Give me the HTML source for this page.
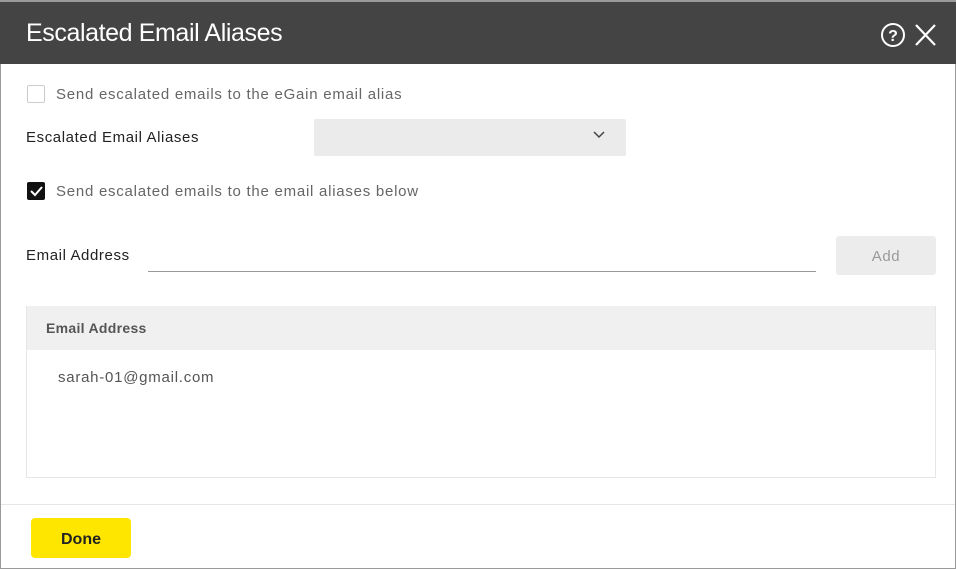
<!DOCTYPE html>
<html><head><style>
body{margin:0;width:956px;height:570px;overflow:hidden;font-family:"Liberation Sans",sans-serif;background:#fff;}
.wrap{position:absolute;left:0;top:0;width:954px;height:568px;border:1px solid #9a9a9a;border-top:none;}
.hdr{position:absolute;left:0;top:0;width:956px;height:64px;background:#444;border-top:2px solid #9a9a9a;box-sizing:border-box;}
.hdr .t{position:absolute;left:26px;top:17px;color:#fff;font-size:25px;letter-spacing:-0.4px;}
.txt{position:absolute;font-size:15px;color:#666;letter-spacing:0.75px;}
.lbl{position:absolute;font-size:15px;color:#222;letter-spacing:0.6px;}
.cb{position:absolute;width:18px;height:18px;border:1px solid #ccc;border-radius:2px;box-sizing:border-box;}
</style></head><body>
<div class="wrap"></div>
<div class="hdr"><div class="t">Escalated Email Aliases</div>
<svg style="position:absolute;left:879px;top:20px" width="60" height="28" viewBox="0 0 60 28">
<circle cx="14" cy="13" r="11" fill="none" stroke="#fff" stroke-width="2"/>
<text x="14" y="19" text-anchor="middle" fill="#fff" font-size="16" font-family="Liberation Sans" font-weight="bold">?</text>
<path d="M37 3L56 23M56 3L37 23" stroke="#fff" stroke-width="2.2"/>
</svg></div>
<div class="cb" style="left:27px;top:85px"></div>
<div class="txt" style="left:56px;top:86px">Send escalated emails to the eGain email alias</div>
<div class="lbl" style="left:26px;top:129px">Escalated Email Aliases</div>
<div style="position:absolute;left:314px;top:119px;width:312px;height:37px;background:#ebebeb;border-radius:2px"></div>
<svg style="position:absolute;left:592px;top:130px" width="14" height="10"><path d="M2 2L7 7L12 2" stroke="#444" stroke-width="1.5" fill="none"/></svg>
<div class="cb" style="left:27px;top:182px;background:#111;border-color:#111"></div>
<svg style="position:absolute;left:27px;top:182px" width="18" height="18"><path d="M4 9L8 13L15 5" stroke="#fff" stroke-width="2" fill="none"/></svg>
<div class="txt" style="left:56px;top:183px">Send escalated emails to the email aliases below</div>
<div class="lbl" style="left:26px;top:247px">Email Address</div>
<div style="position:absolute;left:148px;top:271px;width:668px;height:1px;background:#999"></div>
<div style="position:absolute;left:836px;top:236px;width:100px;height:39px;background:#ececec;border-radius:3px;color:#999;font-size:15px;text-align:center;line-height:41px;letter-spacing:0.6px">Add</div>
<div style="position:absolute;left:26px;top:306px;width:908px;height:170px;border:1px solid #e6e6e6"></div>
<div style="position:absolute;left:27px;top:306px;width:908px;height:44px;background:#f0f0f1"></div>
<div style="position:absolute;left:46px;top:320px;font-size:14px;font-weight:bold;color:#555;letter-spacing:0.3px">Email Address</div>
<div class="txt" style="left:58px;top:369px;color:#555">sarah-01@gmail.com</div>
<div style="position:absolute;left:1px;top:504px;width:954px;height:1px;background:#e6e6e6"></div>
<div style="position:absolute;left:31px;top:518px;width:100px;height:40px;background:#ffe600;border-radius:4px;font-size:16px;font-weight:bold;color:#222;text-align:center;line-height:43px">Done</div>
</body></html>
